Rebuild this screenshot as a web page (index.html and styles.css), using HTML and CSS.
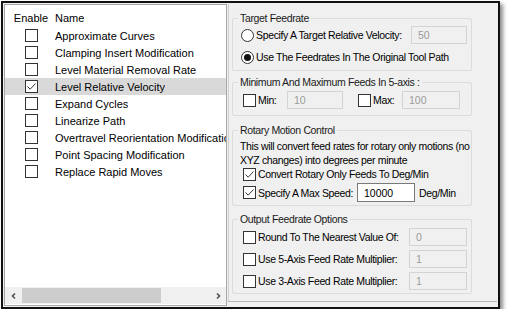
FILE: index.html
```html
<!DOCTYPE html>
<html>
<head>
<meta charset="utf-8">
<link rel="stylesheet" href="styles.css">
</head>
<body>
<div class="window">
  <div class="list">
    <div class="lhead"><span class="c1">Enable</span><span class="c2">Name</span></div>
    <div class="rows">
      <div class="row"><span class="c1"><span class="cb"></span></span><span class="c2">Approximate Curves</span></div>
      <div class="row"><span class="c1"><span class="cb"></span></span><span class="c2">Clamping Insert Modification</span></div>
      <div class="row"><span class="c1"><span class="cb"></span></span><span class="c2">Level Material Removal Rate</span></div>
      <div class="row sel"><span class="c1"><span class="cb"><svg viewBox="0 0 11 11" width="11" height="11"><path d="M1.5 5.5 L4.2 8.2 L9.5 2.5" fill="none" stroke="#333" stroke-width="1"/></svg></span></span><span class="c2">Level Relative Velocity</span></div>
      <div class="row"><span class="c1"><span class="cb"></span></span><span class="c2">Expand Cycles</span></div>
      <div class="row"><span class="c1"><span class="cb"></span></span><span class="c2">Linearize Path</span></div>
      <div class="row"><span class="c1"><span class="cb"></span></span><span class="c2">Overtravel Reorientation Modification</span></div>
      <div class="row"><span class="c1"><span class="cb"></span></span><span class="c2">Point Spacing Modification</span></div>
      <div class="row"><span class="c1"><span class="cb"></span></span><span class="c2">Replace Rapid Moves</span></div>
    </div>
    <div class="hscroll">
      <span class="arrow"><svg viewBox="0 0 8 8" width="8" height="8"><path d="M5 1.5 L2.5 4 L5 6.5" fill="none" stroke="#505050" stroke-width="1.6"/></svg></span>
      <span class="track"><span class="thumb"></span></span>
      <span class="arrow"><svg viewBox="0 0 8 8" width="8" height="8"><path d="M3 1.5 L5.5 4 L3 6.5" fill="none" stroke="#505050" stroke-width="1.6"/></svg></span>
    </div>
  </div>
  <div class="panel">
    <div class="group g1">
      <div class="legend">Target Feedrate</div>
      <div class="frow r1">
        <span class="radio"></span><span class="lbl">Specify A Target Relative Velocity:</span>
        <span class="inp dis w56 push">50</span>
      </div>
      <div class="frow r2">
        <span class="radio on"><span class="dot"></span></span><span class="lbl">Use The Feedrates In The Original Tool Path</span>
      </div>
    </div>
    <div class="group g2">
      <div class="legend">Minimum And Maximum Feeds In 5-axis :</div>
      <div class="frow r3">
        <span class="cb"></span><span class="lbl wmin">Min:</span>
        <span class="inp dis w56">10</span>
        <span class="cb maxcb"></span><span class="lbl wmax">Max:</span>
        <span class="inp dis w58">100</span>
      </div>
    </div>
    <div class="group g3">
      <div class="legend">Rotary Motion Control</div>
      <div class="desc">This will convert feed rates for rotary only motions (no XYZ changes) into degrees per minute</div>
      <div class="frow r4">
        <span class="cb"><svg viewBox="0 0 11 11" width="11" height="11"><path d="M1.5 5.5 L4.2 8.2 L9.5 2.5" fill="none" stroke="#333" stroke-width="1"/></svg></span><span class="lbl">Convert Rotary Only Feeds To Deg/Min</span>
      </div>
      <div class="frow r5">
        <span class="cb"><svg viewBox="0 0 11 11" width="11" height="11"><path d="M1.5 5.5 L4.2 8.2 L9.5 2.5" fill="none" stroke="#333" stroke-width="1"/></svg></span><span class="lbl wspd">Specify A Max Speed:</span>
        <span class="inp act">10000</span><span class="lbl unit">Deg/Min</span>
      </div>
    </div>
    <div class="group g4">
      <div class="legend">Output Feedrate Options</div>
      <div class="frow r6">
        <span class="cb"></span><span class="lbl">Round To The Nearest Value Of:</span>
        <span class="inp dis w58 push">0</span>
      </div>
      <div class="frow r6">
        <span class="cb"></span><span class="lbl">Use 5-Axis Feed Rate Multiplier:</span>
        <span class="inp dis w58 push">1</span>
      </div>
      <div class="frow r6">
        <span class="cb"></span><span class="lbl">Use 3-Axis Feed Rate Multiplier:</span>
        <span class="inp dis w58 push">1</span>
      </div>
    </div>
  </div>
</div>
</body>
</html>
```
FILE: styles.css
```css
* { box-sizing: border-box; }
body { margin: 0; background: #fff; font-family: "Liberation Sans", Arial, sans-serif; color: #000; }
.window {
  margin: 1px 0 0 1px;
  width: 499px;
  height: 308px;
  border: 2px solid #111;
  box-shadow: 3px 3px 4px rgba(0,0,0,0.45);
  background: #f0f0f0;
  padding: 1px;
  display: flex;
  gap: 1px;
}
.list {
  width: 223px;
  height: 302px;
  border: 1px solid #a7a7a7;
  background: #fff;
  display: flex;
  flex-direction: column;
  font-family: "Liberation Sans", Arial, sans-serif;
  font-size: 11px;
}
.lhead { display: flex; align-items: center; height: 18px; margin-top: 4px; }
.rows { flex: 1; }
.row { display: flex; align-items: center; height: 17px; }
.row.sel { background: #d9d9d9; }
.c1 { width: 50px; flex: none; padding-left: 2px; display: flex; justify-content: center; }
.c2 { white-space: nowrap; overflow: hidden; }
.cb {
  width: 13px; height: 13px;
  border: 1px solid #333;
  background: #fff;
  display: inline-flex;
  flex: none;
}
.hscroll { height: 17px; background: #f0f0f0; display: flex; align-items: center; margin-bottom: 1px; }
.arrow { width: 17px; height: 17px; display: flex; align-items: center; justify-content: center; flex: none; }
.track { flex: 1; height: 17px; display: flex; align-items: stretch; padding: 1px 0; }
.thumb { width: 139px; background: #cdcdcd; }
.panel {
  flex: 1;
  height: 298px;
  border-left: 1px solid #cfcfcf;
  border-bottom: 1px solid #b5b5b5;
  padding: 14px 0 0 3px;
  font-family: "Liberation Sans", Arial, sans-serif;
  font-size: 10.5px;
  letter-spacing: -0.35px;
}
.group {
  width: 240px;
  border: 1px solid #dcdcdc;
  border-radius: 2px;
  padding: 0 4px 0 7px;
}
.legend {
  display: block;
  width: fit-content;
  margin-top: -7px;
  margin-left: -2px;
  padding: 0 2px;
  background: #f0f0f0;
  line-height: 13px;
  color: #1a1a1a;
  white-space: nowrap;
}
.g1 { height: 53px; }
.g2 { height: 34px; margin-top: 11px; }
.g3 { height: 76px; margin-top: 14px; }
.g4 { height: 75px; margin-top: 13px; }
.frow { display: flex; align-items: center; }
.r1 { height: 18px; margin-top: 1px; }
.r2 { height: 18px; margin-top: 4px; }
.r3 { height: 18px; margin-top: 2px; }
.r4 { height: 14px; margin-top: 0; }
.r5 { height: 19px; margin-top: 2px; }
.r6 { height: 18px; margin-top: 4px; }
.legend + .r6 { margin-top: 2px; }
.radio {
  width: 13px; height: 13px; border-radius: 50%;
  border: 1px solid #333; background: #fff;
  margin-left: 1px; flex: none;
  display: flex; align-items: center; justify-content: center;
}
.dot { width: 7px; height: 7px; border-radius: 50%; background: #111; }
.frow .cb { margin-left: 3px; }
.lbl { margin-left: 2px; white-space: nowrap; }
.inp {
  height: 18px;
  display: flex; align-items: center;
  padding-left: 6px;
  flex: none;
  letter-spacing: 0;
}
.dis { border: 1px solid #d4d4d4; background: #f0f0f0; color: #9a9a9a; }
.act { border: 1px solid #7a7a7a; background: #fff; color: #000; width: 58px; height: 19px; }
.w56 { width: 56px; }
.w58 { width: 58px; }
.push { margin-left: auto; }
.wmin { width: 29px; }
.frow .maxcb { margin-left: 15px; }
.wmax { width: 29px; }
.wspd { width: 99px; }
.desc { line-height: 14px; margin-top: 2px; width: 232px; }
.unit { margin-left: 4px; }
```
